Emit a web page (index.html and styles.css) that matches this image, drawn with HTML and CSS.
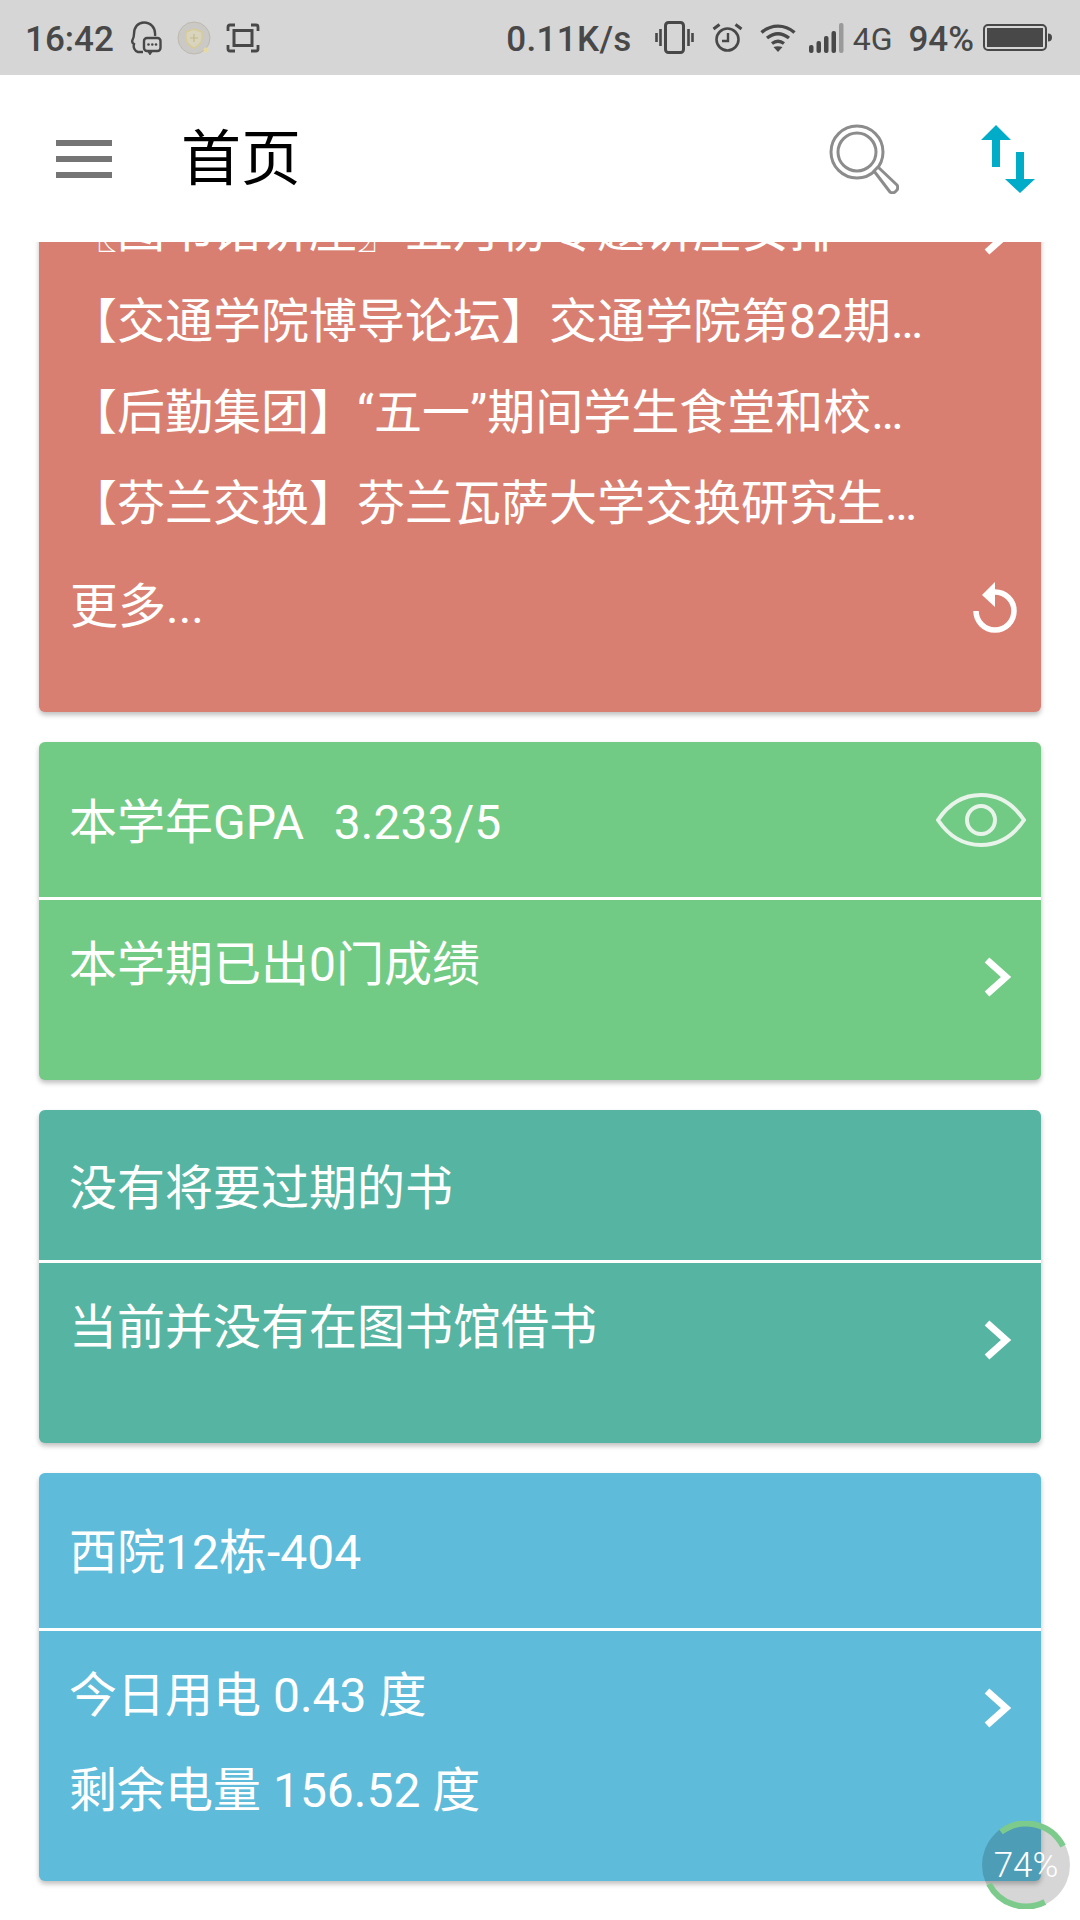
FILE: index.html
```html
<!DOCTYPE html>
<html lang="zh-CN">
<head>
    <meta charset="UTF-8">
    <meta name="viewport" content="width=device-width, initial-scale=1.0">
    <title>首页</title>
    <link rel="stylesheet" href="styles.css">
</head>
<body>
    <!-- Status bar -->
    <div class="status-bar">
        <div class="status-left">
            <span class="time st-text">16:42</span>
            <svg class="st-qq" viewBox="0 0 32 34" width="32" height="34">
                <path d="M25 15C26 6 20 1.500 14 1.500S4 6 4 13c0 3-.5 4-1.500 6-1 2 0 3 1.500 4-1 3 .5 7 4 8h5" fill="none" stroke="#484848" stroke-width="2.400"/>
                <rect x="14" y="17" width="16.500" height="13" rx="3" fill="#d6d6d6" stroke="#484848" stroke-width="2.400"/>
                <path d="M18 30l2 3 2-3" fill="none" stroke="#484848" stroke-width="1.800"/>
                <circle cx="18.500" cy="23.500" r="1.300" fill="#484848"/>
                <circle cx="22.300" cy="23.500" r="1.300" fill="#484848"/>
                <circle cx="26" cy="23.500" r="1.300" fill="#484848"/>
            </svg>
            <svg class="st-guard" viewBox="0 0 34 34" width="34" height="34">
                <circle cx="17" cy="17" r="16" fill="#cbc9c6" stroke="#bdb9ac" stroke-width="1"/>
                <path d="M17 8l8 3v6c0 5-4 8-8 10-4-2-8-5-8-10v-6z" fill="#d9d4bd" stroke="#d8cc96" stroke-width="1.500"/>
                <path d="M17 13v8M13 17h8" stroke="#c4b988" stroke-width="1.200"/>
                <circle cx="29" cy="29" r="2.500" fill="#e6d9a0"/>
            </svg>
            <svg class="st-capture" viewBox="0 0 34 30" width="34" height="30">
                <path d="M2 8V4q0-2 2-2h5M25 2h5q2 0 2 2v4M32 22v4q0 2-2 2h-5M9 28H4q-2 0-2-2v-4" fill="none" stroke="#484848" stroke-width="2.800"/>
                <rect x="8" y="7.500" width="18" height="15" fill="none" stroke="#484848" stroke-width="3"/>
            </svg>
        </div>
        <div class="status-right">
            <span class="speed st-text">0.11K/s</span>
            <svg class="st-vibrate" viewBox="0 0 39 33" width="39" height="33">
                <rect x="10.500" y="1.500" width="18" height="30" rx="3" fill="none" stroke="#484848" stroke-width="3"/>
                <path d="M5.500 8v17M1.500 12v9M33.500 8v17M37.500 12v9" stroke="#484848" stroke-width="2.600"/>
            </svg>
            <svg class="st-alarm" viewBox="0 0 31 29" width="31" height="29">
                <circle cx="15.500" cy="16.500" r="11" fill="none" stroke="#484848" stroke-width="2.600"/>
                <path d="M16 10v8h-6" fill="none" stroke="#484848" stroke-width="2.400"/>
                <path d="M1.500 6l6-4.500M29.500 6l-6-4.500" stroke="#484848" stroke-width="3"/>
            </svg>
            <svg class="st-wifi" viewBox="0 0 36 28" width="36" height="28">
                <path d="M1.500 8.500c10-8.500 23-8.500 33 0M7 14c7-5.500 15-5.500 22 0M12 19.500c3.800-2.800 8.200-2.800 12 0" fill="none" stroke="#484848" stroke-width="3.400"/>
                <path d="M13.500 23q4.500-1.500 9 0L18 28z" fill="#484848"/>
            </svg>
            <svg class="st-signal" viewBox="0 0 35 30" width="35" height="30">
                <rect x="0" y="22" width="4.500" height="8" rx="2" fill="#484848"/>
                <rect x="7.500" y="18" width="4.500" height="12" rx="2" fill="#484848"/>
                <rect x="15" y="13" width="4.500" height="17" rx="2" fill="#484848"/>
                <rect x="22.500" y="8" width="4.500" height="22" rx="2" fill="#484848"/>
                <rect x="30" y="0" width="4.500" height="30" rx="2" fill="#9a9a9a"/>
            </svg>
            <span class="net">4G</span>
            <span class="battery-pct st-text">94%</span>
            <svg class="st-battery" viewBox="0 0 69 27" width="69" height="27">
                <rect x="1" y="1" width="62" height="25" rx="4" fill="none" stroke="#484848" stroke-width="2"/>
                <rect x="4" y="4" width="56" height="19" fill="#484848"/>
                <path d="M65 9.500q4 0 4 4t-4 4z" fill="#484848"/>
            </svg>
        </div>
    </div>

    <!-- Toolbar -->
    <header class="toolbar">
        <button class="menu-btn" type="button" aria-label="menu"><i></i><i></i><i></i></button>
        <h1 class="title">首页</h1>
        <svg class="search-icon" viewBox="0 0 70 70" width="70" height="70">
            <circle cx="28" cy="28" r="26" fill="none" stroke="#8c8c8c" stroke-width="3"/>
            <circle cx="28" cy="28" r="19" fill="none" stroke="#8c8c8c" stroke-width="3"/>
            <path d="M45 47l4-4 19 18q1.500 2.500 0 5l-2 2q-2.500 1.500-5 0z" fill="#fff" stroke="#8c8c8c" stroke-width="3" stroke-linejoin="round"/>
        </svg>
        <svg class="swap-icon" viewBox="0 0 54 68" width="54" height="68">
            <path d="M15 0l15 15h-11v27h-8v-27h-11z" fill="#00acc8"/>
            <path d="M39 68l-15-14h11v-27h8v27h11z" fill="#00acc8"/>
        </svg>
    </header>

    <!-- Scrolled card list, the first card is partly under the toolbar -->
    <main class="content">
        <div class="card-list">
            <section class="card card-news">
                <div class="news-row">
                    <span class="news-text">〖图书馆讲座〗五月份专题讲座安排</span>
                    <svg class="chevron news-chevron" viewBox="0 0 28 42" width="28" height="42"><path d="M3 4l19 17-19 17" fill="none" stroke="#fff" stroke-width="7"/></svg>
                </div>
                <div class="news-row"><span class="news-text">【交通学院博导论坛】交通学院第82期…</span></div>
                <div class="news-row"><span class="news-text">【后勤集团】“五一”期间学生食堂和校…</span></div>
                <div class="news-row"><span class="news-text">【芬兰交换】芬兰瓦萨大学交换研究生…</span></div>
                <div class="news-more">
                    <span>更多...</span>
                    <svg class="refresh" viewBox="0 0 44 51" width="44" height="51">
                        <path d="M3 29a19 19 0 1 0 19-19" fill="none" stroke="#fff" stroke-width="5.500"/>
                        <path d="M22 0v25L9 13z" fill="#fff"/>
                    </svg>
                </div>
            </section>

            <section class="card card-gpa">
                <div class="card-head head-gpa">
                    <span class="gpa-value">本学年GPA&nbsp;&nbsp;3.233/5</span>
                    <svg class="eye" viewBox="0 0 90 54" width="90" height="54">
                        <path d="M2 27C14 9 30 2 45 2s31 7 43 25C76 45 60 52 45 52S14 45 2 27z" fill="none" stroke="#e8f3ea" stroke-width="4"/>
                        <circle cx="45" cy="27" r="14" fill="none" stroke="#e8f3ea" stroke-width="4"/>
                    </svg>
                </div>
                <div class="card-body body-gpa">
                    <p>本学期已出0门成绩</p>
                    <svg class="chevron" viewBox="0 0 28 42" width="28" height="42"><path d="M3 4l19 17-19 17" fill="none" stroke="#fff" stroke-width="7"/></svg>
                </div>
            </section>

            <section class="card card-library">
                <div class="card-head head-library"><span>没有将要过期的书</span></div>
                <div class="card-body body-library">
                    <p>当前并没有在图书馆借书</p>
                    <svg class="chevron" viewBox="0 0 28 42" width="28" height="42"><path d="M3 4l19 17-19 17" fill="none" stroke="#fff" stroke-width="7"/></svg>
                </div>
            </section>

            <section class="card card-power">
                <div class="card-head head-power"><span>西院12栋-404</span></div>
                <div class="card-body body-power">
                    <div class="power-lines">
                        <p>今日用电 0.43 度</p>
                        <p>剩余电量 156.52 度</p>
                    </div>
                    <svg class="chevron" viewBox="0 0 28 42" width="28" height="42"><path d="M3 4l19 17-19 17" fill="none" stroke="#fff" stroke-width="7"/></svg>
                </div>
            </section>
        </div>
    </main>

    <!-- Floating memory ball -->
    <div class="float-ball">
        <svg viewBox="0 0 88 88" width="88" height="88">
            <path d="M62.800 81A41.500 41.500 0 0 1 7 62.800M19 10.900A41.500 41.500 0 0 1 81 25.200" fill="none" stroke="#7ccb8c" stroke-width="6"/>
        </svg>
        <span>74%</span>
    </div>
</body>
</html>
```

FILE: styles.css
```css
* {
    box-sizing: border-box;
}

html, body {
    margin: 0;
    padding: 0;
}

body {
    position: relative;
    width: 1080px;
    height: 1920px;
    overflow: hidden;
    background-color: #fff;
    font-family: Roboto, "Noto Sans CJK SC", sans-serif;
    color: #fff;
}

p {
    margin: 0;
}

/* status bar */
.status-bar {
    height: 75px;
    padding: 0 28px 0 25px;
    display: flex;
    justify-content: space-between;
    align-items: center;
    background-color: #d6d6d6;
    color: #484848;
    font-size: 35px;
    font-weight: 500;
}

.status-left, .status-right {
    display: flex;
    align-items: center;
}

.st-text {
    margin-top: 3px;
}

.st-qq {
    margin-left: 16px;
}

.st-guard {
    margin-left: 15px;
}

.st-capture {
    margin-left: 15px;
}

.speed {
    letter-spacing: 0.3px;
}

.st-vibrate {
    margin-left: 23px;
}

.st-alarm {
    margin-left: 18px;
}

.st-wifi {
    margin-left: 17px;
}

.st-signal {
    margin-left: 13px;
}

.net {
    margin-left: 9px;
    margin-top: 2px;
    font-size: 32px;
    font-weight: 400;
}

.battery-pct {
    margin-left: 16px;
}

.st-battery {
    margin-left: 9px;
}

/* toolbar */
.toolbar {
    height: 167px;
    padding-left: 56px;
    display: flex;
    align-items: center;
    background-color: #fff;
}

.menu-btn {
    width: 56px;
    padding: 0;
    display: flex;
    flex-direction: column;
    gap: 10px;
    background: none;
    border: none;
}

.menu-btn i {
    display: block;
    height: 6px;
    background-color: #757575;
}

.title {
    margin: 2px 0 0 69px;
    flex: 1;
    color: #000;
    font-size: 60px;
    font-weight: 400;
    line-height: 1;
}

.search-icon {
    margin-right: 82px;
}

.swap-icon {
    margin-right: 45px;
}

/* card list */
.content {
    height: 1678px;
    overflow: hidden;
}

.card-list {
    margin-top: -56px;
    padding: 0 39px;
    display: flex;
    flex-direction: column;
    gap: 30px;
}

.card {
    border-radius: 6px;
    box-shadow: 0 3px 5px rgba(0, 0, 0, 0.25);
    font-size: 48px;
    line-height: 1.3;
}

.card-news {
    height: 526px;
    padding-left: 30px;
    background-color: #d97f71;
}

.card-gpa {
    background-color: #72cb85;
}

.card-library {
    background-color: #55b5a2;
}

.card-power {
    background-color: #5ebbd9;
}

.news-row {
    height: 91px;
    padding-right: 29px;
    display: flex;
    justify-content: space-between;
    align-items: center;
}

.news-text {
    white-space: nowrap;
}

.news-chevron {
    margin-top: 7px;
}

.news-more {
    height: 96px;
    margin-top: 9px;
    margin-left: 1px;
    padding-right: 24px;
    display: flex;
    justify-content: space-between;
    align-items: center;
}

.card-head {
    padding-left: 30px;
    display: flex;
    align-items: center;
    justify-content: space-between;
    border-bottom: 3px solid #fff;
}

.gpa-value {
    word-spacing: 3px;
}

.head-gpa {
    height: 158px;
    padding-right: 15px;
}

.head-gpa span {
    margin-top: 8px;
}

.head-library {
    height: 153px;
    padding-top: 8px;
}

.head-power {
    height: 158px;
    padding-top: 5px;
}

.card-body {
    padding: 34px 29px 0 30px;
    display: flex;
    justify-content: space-between;
    align-items: flex-start;
}

.body-gpa {
    height: 180px;
}

.body-library {
    height: 180px;
}

.body-power {
    height: 250px;
}

.card-body .chevron {
    margin-top: 22px;
}

.power-lines {
    display: flex;
    flex-direction: column;
    gap: 33px;
}

/* memory ball, floats over the list */
.float-ball {
    position: absolute;
    left: 982px;
    top: 1821px;
    width: 88px;
    height: 88px;
    display: flex;
    align-items: center;
    justify-content: center;
    border-radius: 50%;
    background-color: rgba(0, 0, 0, 0.16);
    font-size: 35px;
    font-weight: 300;
    color: #fff;
}

.float-ball svg {
    position: absolute;
    left: 0;
    top: 0;
}

.float-ball span {
    position: relative;
}
```
